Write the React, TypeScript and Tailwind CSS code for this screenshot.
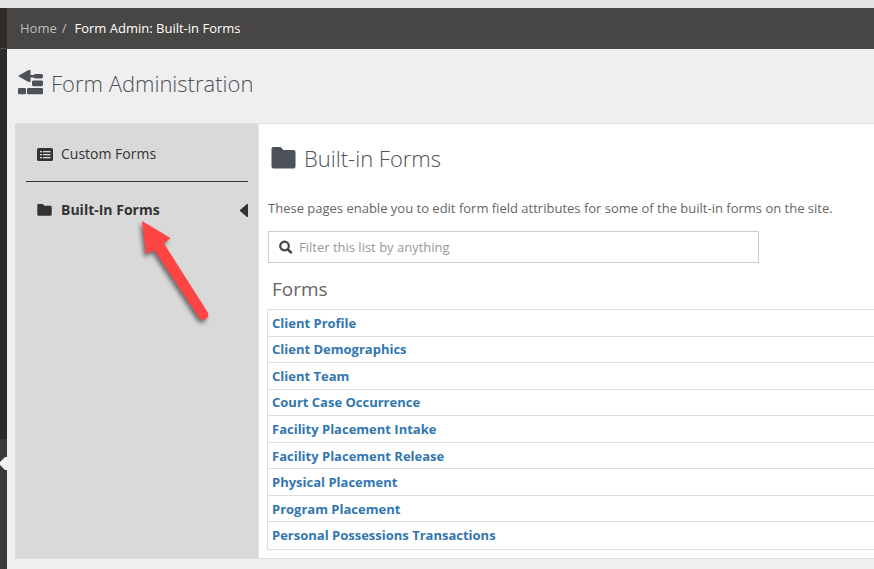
import React from "react";

const forms = [
  "Client Profile",
  "Client Demographics",
  "Client Team",
  "Court Case Occurrence",
  "Facility Placement Intake",
  "Facility Placement Release",
  "Physical Placement",
  "Program Placement",
  "Personal Possessions Transactions",
];

function FolderIcon({ className }: { className: string }) {
  return (
    <svg viewBox="0 0 25 22" preserveAspectRatio="none" className={className} fill="currentColor" aria-hidden="true">
      <path d="M2.500 0H9.500L12.500 3H22.500A2 2 0 0 1 24.500 5V19.500A2 2 0 0 1 22.500 21.500H2.500A2 2 0 0 1 .5 19.500V2A2 2 0 0 1 2.500 0Z" />
    </svg>
  );
}

function ListIcon() {
  return (
    <svg viewBox="0 0 16 13" className="h-[13px] w-4 shrink-0" aria-hidden="true">
      <rect width="16" height="13" rx="1.5" fill="currentColor" />
      <g fill="#d9d9d9">
        <rect x="3" y="3" width="2" height="1.3" />
        <rect x="6" y="3" width="7.500" height="1.3" />
        <rect x="3" y="6" width="2" height="1.3" />
        <rect x="6" y="6" width="7.500" height="1.3" />
        <rect x="3" y="9" width="2" height="1.3" />
        <rect x="6" y="9" width="7.500" height="1.3" />
      </g>
    </svg>
  );
}

function AdminIcon() {
  return (
    <svg viewBox="0 0 25 25" className="h-[25px] w-[25px] shrink-0" fill="currentColor" aria-hidden="true">
      <path d="M0 6 10.500 0H12.500V5H17V7.400H12.500V12H10.500Z" />
      <rect x="15.500" y="4" width="9.500" height="4.400" rx="1.6" />
      <rect x="14" y="10.500" width="11" height="5.700" rx="1.4" />
      <rect x="0" y="18" width="8" height="6.300" rx="1.3" />
      <rect x="9" y="18" width="16" height="6.300" rx="1.3" />
    </svg>
  );
}

function SearchIcon() {
  return (
    <svg viewBox="0 0 14 14" className="h-[14px] w-[14px] shrink-0" fill="none" stroke="#444444" aria-hidden="true">
      <circle cx="5.500" cy="6" r="4.300" strokeWidth="2.200" />
      <path d="M8.800 9.300 11.900 12.400" strokeWidth="2.600" strokeLinecap="round" />
    </svg>
  );
}

function PointerArrow() {
  return (
    <svg
      viewBox="0 0 80 116"
      className="pointer-events-none absolute top-[90px] left-[117px] h-[116px] w-20 overflow-visible drop-shadow-[-2px_3px_2px_rgba(0,0,0,0.5)]"
      aria-hidden="true"
    >
      <path d="M10 7 38.500 24 32 29.500 75.500 98A5 5 0 0 1 67 103.500L22.500 36.500 14 40Z" fill="#ff4444" />
    </svg>
  );
}

export default function App() {
  return (
    <div className="flex min-h-screen flex-col overflow-x-hidden bg-[#efefef] font-['Open_Sans','Noto_Sans',sans-serif] text-[13px] leading-5 text-[#666666]">
      <div className="h-2 bg-[#e3e3e3]" />
      <div className="flex flex-1">
        <aside className="flex w-[7px] shrink-0 flex-col bg-[#3d3937]">
          <div className="h-10 bg-[#2e2a27]" />
          <div className="h-px bg-[#4d4f55]" />
          <div className="h-[390px] bg-[#2e2a27]" />
          <button aria-label="Expand menu" className="mt-[18px] h-[13px] w-[7px]">
            <svg viewBox="0 0 7 13" className="h-[13px] w-[7px]" fill="#efefef" aria-hidden="true">
              <path d="M7 0V13H5L0 8V5L5 0Z" />
            </svg>
          </button>
        </aside>

        <div className="min-w-0 flex-1">
          <nav aria-label="Breadcrumb" className="flex h-[41px] items-center bg-[#484644] pb-[2px] pl-[13px] text-white">
            <a href="#home" className="text-[#bdbdbd]">Home</a>
            <span className="px-[6px] pr-2 pl-[5px] text-[#bdbdbd]">/</span>
            <span>Form Admin: Built-in Forms</span>
          </nav>

          <header className="flex h-[74px] items-center gap-2 pb-[7px] pl-[11px] text-[#4d5158]">
            <AdminIcon />
            <h1 className="text-[22px] leading-8 font-light">Form Administration</h1>
          </header>

          <main className="ml-2 flex border-y border-[#e0e0e0] bg-white">
            <nav aria-label="Forms" className="relative w-[244px] shrink-0 border-r border-[#e8e8e8] bg-[#d9d9d9] pr-[10px] pl-[11px] text-sm text-[#333333]">
              <a href="#custom" className="flex h-[58px] items-center gap-2 border-b border-[#333333] pt-[3px] pl-[11px]">
                <ListIcon />
                <span>Custom Forms</span>
              </a>
              <a href="#builtin" aria-current="page" className="flex h-14 items-center gap-2 pl-[11px] font-bold">
                <FolderIcon className="mr-px h-3 w-[15px] shrink-0" />
                <span className="flex-1">Built-In Forms</span>
                <svg viewBox="0 0 8 13" className="h-[13px] w-2" fill="currentColor" aria-hidden="true">
                  <path d="M8 0V13H7L0 7V6L7 0Z" />
                </svg>
              </a>
              <PointerArrow />
            </nav>

            <section className="min-w-0 flex-1 pb-2 pl-2">
              <div className="mt-[18px] flex items-center gap-2 pl-1 text-[#4d5158]">
                <FolderIcon className="h-[22px] w-[25px] shrink-0" />
                <h2 className="text-[22px] leading-8 font-light">Built-in Forms</h2>
              </div>
              <p className="mt-6 pl-px">These pages enable you to edit form field attributes for some of the built-in forms on the site.</p>
              <label className="mt-[13px] ml-px flex h-8 w-[491px] max-w-full items-center gap-[6px] border border-[#cccccc] pl-[10px]">
                <SearchIcon />
                <input
                  type="text"
                  aria-label="Filter this list"
                  placeholder="Filter this list by anything"
                  className="min-w-0 flex-1 outline-none placeholder:text-[#999999]"
                />
              </label>
              <h3 className="mt-3 pl-[5px] text-[19px] leading-7">Forms</h3>
              <ul className="mt-[6px] grid h-[241px] auto-rows-fr border-b border-l border-[#dddddd] pb-px">
                {forms.map((name) => (
                  <li key={name} className="flex items-center border-t border-[#dddddd] pl-1">
                    <a href="#form" className="font-bold text-[#3276b1]">{name}</a>
                  </li>
                ))}
              </ul>
            </section>
          </main>
        </div>
      </div>
    </div>
  );
}
